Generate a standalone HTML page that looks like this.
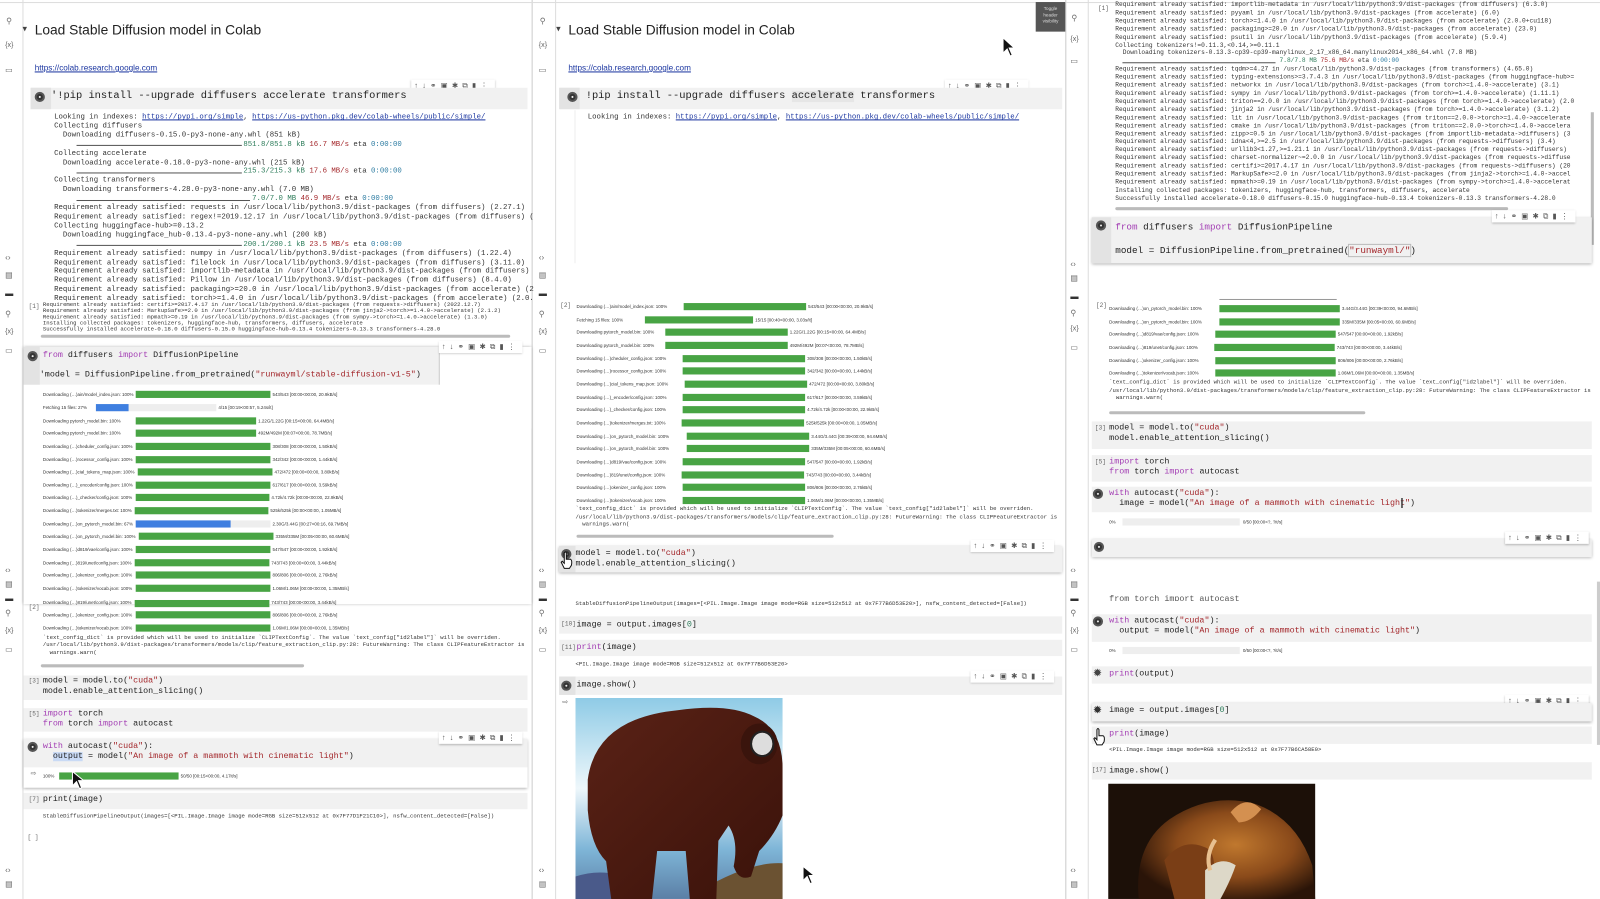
<!DOCTYPE html>
<html><head><meta charset="utf-8"><style>
*{margin:0;padding:0;box-sizing:border-box}
html,body{width:1600px;height:899px;overflow:hidden;background:#fff}
#w{position:absolute;left:0;top:0;width:1568px;height:881px;transform:scale(1.0204,1.0204);transform-origin:0 0;font-family:"Liberation Sans",sans-serif;color:#222}
.a{position:absolute;white-space:pre}
.m{font-family:"Liberation Mono",monospace}
.o{position:absolute;white-space:pre;font-family:"Liberation Mono",monospace;font-size:7.2px;line-height:8.9px;color:#333}
.s{position:absolute;white-space:pre;font-family:"Liberation Mono",monospace;font-size:5.5px;line-height:6px;color:#333}
.band{position:absolute;background:#f1f1f1}
.pl{position:absolute;white-space:pre;font-size:4.4px;line-height:7px;color:#333}
.bg{position:absolute;height:7px;background:#48a444}
.bb{position:absolute;height:7px;background:#3f7fe0}
.bgr{position:absolute;height:7px;background:#eee}
.ic{position:absolute;color:#666;font-size:8px;line-height:8px}
.run{position:absolute;width:10px;height:10px;border-radius:50%;background:#333;border:2px solid #555}
.run:after{content:"";position:absolute;left:2px;top:2px;width:2px;height:2px;border-radius:50%;background:#eee}
.tb{position:absolute;font-size:7.5px;color:#555;letter-spacing:4px;background:#fff;box-shadow:0 1px 2px rgba(0,0,0,.25);padding:1px 3px;white-space:pre}
.k{color:#a23cb3}.st{color:#a3262a}.u{color:#1a35a0;text-decoration:underline}.gr{color:#2e7d5b}
.hl{position:absolute;height:1px;background:#555}
.sb{position:absolute;height:3px;background:#bbb;border-radius:2px}
.num{position:absolute;font-size:6px;color:#666;font-family:"Liberation Mono",monospace}
.vl{position:absolute;width:1px;background:#ddd}
</style></head><body><div id="w">

<div class="vl" style="left:22px;top:0;height:881px"></div>
<div class="vl" style="left:521px;top:0;height:881px;background:#ccc"></div>
<div style="position:absolute;left:518px;top:420px;width:3px;height:120px;background:#bbb"></div>
<div class="vl" style="left:544px;top:0;height:881px"></div>
<div class="vl" style="left:1044px;top:0;height:881px;background:#ccc"></div>
<div class="vl" style="left:1066px;top:0;height:881px"></div>
<div style="position:absolute;left:1559px;top:110px;width:3px;height:130px;background:#bbb"></div>
<div style="position:absolute;left:0;top:2px;width:1568px;height:1px;background:#ddd"></div>

<!-- sidebar icons -->
<div class="ic" style="left:6px;top:17px">⚲</div><div class="ic" style="left:5px;top:41px;font-size:7px">{x}</div><div class="ic" style="left:5px;top:65px">▭</div>
<div class="ic" style="left:5px;top:249px">‹›</div><div class="ic" style="left:5px;top:266px">▤</div><div class="ic" style="left:5px;top:284px;color:#333">▬</div>
<div class="ic" style="left:5px;top:304px">⚲</div><div class="ic" style="left:5px;top:322px;font-size:7px">{x}</div><div class="ic" style="left:5px;top:340px">▭</div>
<div class="ic" style="left:5px;top:555px">‹›</div><div class="ic" style="left:5px;top:569px">▤</div><div class="ic" style="left:5px;top:583px;color:#333">▬</div><div class="ic" style="left:5px;top:597px">⚲</div><div class="ic" style="left:5px;top:615px;font-size:7px">{x}</div><div class="ic" style="left:5px;top:633px">▭</div>
<div class="ic" style="left:5px;top:849px">‹›</div><div class="ic" style="left:5px;top:863px">▤</div>

<div class="ic" style="left:529px;top:17px">⚲</div><div class="ic" style="left:528px;top:41px;font-size:7px">{x}</div><div class="ic" style="left:528px;top:65px">▭</div>
<div class="ic" style="left:528px;top:249px">‹›</div><div class="ic" style="left:528px;top:266px">▤</div><div class="ic" style="left:528px;top:284px;color:#333">▬</div>
<div class="ic" style="left:528px;top:304px">⚲</div><div class="ic" style="left:528px;top:322px;font-size:7px">{x}</div><div class="ic" style="left:528px;top:340px">▭</div>
<div class="ic" style="left:528px;top:555px">‹›</div><div class="ic" style="left:528px;top:569px">▤</div><div class="ic" style="left:528px;top:583px;color:#333">▬</div><div class="ic" style="left:528px;top:597px">⚲</div><div class="ic" style="left:528px;top:615px;font-size:7px">{x}</div><div class="ic" style="left:528px;top:633px">▭</div>
<div class="ic" style="left:528px;top:849px">‹›</div><div class="ic" style="left:528px;top:863px">▤</div>

<div class="ic" style="left:1050px;top:14px">⚲</div><div class="ic" style="left:1049px;top:35px;font-size:7px">{x}</div><div class="ic" style="left:1049px;top:56px">▭</div>
<div class="ic" style="left:1049px;top:255px">‹›</div><div class="ic" style="left:1049px;top:269px">▤</div><div class="ic" style="left:1049px;top:287px;color:#333">▬</div>
<div class="ic" style="left:1049px;top:303px">⚲</div><div class="ic" style="left:1049px;top:319px;font-size:7px">{x}</div><div class="ic" style="left:1049px;top:337px">▭</div>
<div class="ic" style="left:1049px;top:555px">‹›</div><div class="ic" style="left:1049px;top:569px">▤</div><div class="ic" style="left:1049px;top:583px;color:#333">▬</div><div class="ic" style="left:1049px;top:597px">⚲</div><div class="ic" style="left:1049px;top:615px;font-size:7px">{x}</div><div class="ic" style="left:1049px;top:633px">▭</div>
<div class="ic" style="left:1049px;top:849px">‹›</div><div class="ic" style="left:1049px;top:863px">▤</div>

<!-- ================= PANEL 1 ================= -->
<div class="a" style="left:22px;top:23px;font-size:9px;color:#444">▾</div>
<div class="a" style="left:34px;top:22px;font-size:13.5px;color:#222">Load Stable Diffusion model in Colab</div>
<div class="a u" style="left:34px;top:62px;font-size:8px">https://colab.research.google.com</div>
<div class="tb" style="left:403px;top:78px">↑↓⚭▣✱⧉▮⋮</div>
<div class="band" style="left:30px;top:86px;width:487px;height:21px"></div>
<div class="band" style="left:30px;top:86px;width:20px;height:21px;background:#e3e3e3"></div>
<div class="run" style="left:34px;top:90px"></div>
<div class="a m" style="left:50px;top:89px;font-size:10.2px">'!pip install --upgrade diffusers accelerate transformers</div>
<div class="o" style="left:53px;top:111px">Looking in indexes: <span class="u">https://pypi.org/simple</span>, <span class="u">https://us-python.pkg.dev/colab-wheels/public/simple/</span>
Collecting diffusers
  Downloading diffusers-0.15.0-py3-none-any.whl (851 kB)
                                           <span class="gr">851.8/851.8 kB</span> <span class="st">16.7 MB/s</span> eta <span style="color:#2a7aa0">0:00:00</span>
Collecting accelerate
  Downloading accelerate-0.18.0-py3-none-any.whl (215 kB)
                                           <span class="gr">215.3/215.3 kB</span> <span class="st">17.6 MB/s</span> eta <span style="color:#2a7aa0">0:00:00</span>
Collecting transformers
  Downloading transformers-4.28.0-py3-none-any.whl (7.0 MB)
                                             <span class="gr">7.0/7.0 MB</span> <span class="st">46.9 MB/s</span> eta <span style="color:#2a7aa0">0:00:00</span>
Requirement already satisfied: requests in /usr/local/lib/python3.9/dist-packages (from diffusers) (2.27.1)
Requirement already satisfied: regex!=2019.12.17 in /usr/local/lib/python3.9/dist-packages (from diffusers) (
Collecting huggingface-hub>=0.13.2
  Downloading huggingface_hub-0.13.4-py3-none-any.whl (200 kB)
                                           <span class="gr">200.1/200.1 kB</span> <span class="st">23.5 MB/s</span> eta <span style="color:#2a7aa0">0:00:00</span>
Requirement already satisfied: numpy in /usr/local/lib/python3.9/dist-packages (from diffusers) (1.22.4)
Requirement already satisfied: filelock in /usr/local/lib/python3.9/dist-packages (from diffusers) (3.11.0)
Requirement already satisfied: importlib-metadata in /usr/local/lib/python3.9/dist-packages (from diffusers)
Requirement already satisfied: Pillow in /usr/local/lib/python3.9/dist-packages (from diffusers) (8.4.0)
Requirement already satisfied: packaging>=20.0 in /usr/local/lib/python3.9/dist-packages (from accelerate) (2
Requirement already satisfied: torch>=1.4.0 in /usr/local/lib/python3.9/dist-packages (from accelerate) (2.0.</div>
<div class="hl" style="left:75px;top:142px;width:162px"></div>
<div class="hl" style="left:75px;top:169px;width:162px"></div>
<div class="hl" style="left:75px;top:196px;width:170px"></div>
<div class="hl" style="left:75px;top:240px;width:162px"></div>
<div class="num" style="left:28px;top:297px">[1]</div>
<div class="s" style="left:42px;top:296px">Requirement already satisfied: certifi>=2017.4.17 in /usr/local/lib/python3.9/dist-packages (from requests->diffusers) (2022.12.7)
Requirement already satisfied: MarkupSafe>=2.0 in /usr/local/lib/python3.9/dist-packages (from jinja2->torch>=1.4.0->accelerate) (2.1.2)
Requirement already satisfied: mpmath>=0.19 in /usr/local/lib/python3.9/dist-packages (from sympy->torch>=1.4.0->accelerate) (1.3.0)
Installing collected packages: tokenizers, huggingface-hub, transformers, diffusers, accelerate
Successfully installed accelerate-0.18.0 diffusers-0.15.0 huggingface-hub-0.13.4 tokenizers-0.13.3 transformers-4.28.0</div>
<div class="sb" style="left:40px;top:328px;width:460px"></div>

<div style="position:absolute;left:23px;top:340px;width:498px;height:252px;background:#fff;box-shadow:0 0 3px rgba(0,0,0,.35)"></div>
<div class="band" style="left:23px;top:340px;width:408px;height:37px"></div>
<div class="band" style="left:23px;top:340px;width:16px;height:37px;background:#e3e3e3"></div>
<div style="position:absolute;left:430px;top:340px;width:1px;height:37px;background:#ccc"></div>
<div class="tb" style="left:430px;top:334px">↑↓⚭▣✱⧉▮⋮</div>
<div class="run" style="left:27px;top:344px"></div>
<div class="a m" style="left:42px;top:344px;font-size:8.2px"><span class="k">from</span> diffusers <span class="k">import</span> DiffusionPipeline</div>
<div class="a m" style="left:39px;top:363px;font-size:8.2px">'model = DiffusionPipeline.from_pretrained(<span class="st">"runwayml/stable-diffusion-v1-5"</span>)</div>

<div class="pl" style="left:42px;top:383px">Downloading (…)ain/model_index.json: 100%</div><div class="bg" style="left:133px;top:383px;width:132px"></div><div class="pl" style="left:267px;top:383px">543/543 [00:00&lt;00:00, 20.9kB/s]</div>
<div class="pl" style="left:42px;top:396px">Fetching 15 files: 27%</div><div class="bgr" style="left:94px;top:396px;width:118px"></div><div class="bb" style="left:94px;top:396px;width:32px"></div><div class="pl" style="left:214px;top:396px">4/15 [00:19&lt;00:57, 5.24s/it]</div>
<div class="pl" style="left:42px;top:409px">Downloading pytorch_model.bin: 100%</div><div class="bg" style="left:133px;top:409px;width:118px"></div><div class="pl" style="left:253px;top:409px">1.22G/1.22G [00:15&lt;00:00, 64.4MB/s]</div>
<div class="pl" style="left:42px;top:421px">Downloading pytorch_model.bin: 100%</div><div class="bg" style="left:133px;top:421px;width:118px"></div><div class="pl" style="left:253px;top:421px">492M/492M [00:07&lt;00:00, 78.7MB/s]</div>
<div class="pl" style="left:42px;top:434px">Downloading (…)cheduler_config.json: 100%</div><div class="bg" style="left:133px;top:434px;width:132px"></div><div class="pl" style="left:267px;top:434px">308/308 [00:00&lt;00:00, 1.50kB/s]</div>
<div class="pl" style="left:42px;top:447px">Downloading (…)rocessor_config.json: 100%</div><div class="bg" style="left:133px;top:447px;width:132px"></div><div class="pl" style="left:267px;top:447px">342/342 [00:00&lt;00:00, 1.44kB/s]</div>
<div class="pl" style="left:42px;top:459px">Downloading (…)cial_tokens_map.json: 100%</div><div class="bg" style="left:135px;top:459px;width:132px"></div><div class="pl" style="left:269px;top:459px">472/472 [00:00&lt;00:00, 3.80kB/s]</div>
<div class="pl" style="left:42px;top:472px">Downloading (…)_encoder/config.json: 100%</div><div class="bg" style="left:133px;top:472px;width:132px"></div><div class="pl" style="left:267px;top:472px">617/617 [00:00&lt;00:00, 3.59kB/s]</div>
<div class="pl" style="left:42px;top:484px">Downloading (…)_checker/config.json: 100%</div><div class="bg" style="left:133px;top:484px;width:131px"></div><div class="pl" style="left:266px;top:484px">4.72k/4.72k [00:00&lt;00:00, 22.9kB/s]</div>
<div class="pl" style="left:42px;top:497px">Downloading (…)tokenizer/merges.txt: 100%</div><div class="bg" style="left:132px;top:497px;width:131px"></div><div class="pl" style="left:265px;top:497px">525k/525k [00:00&lt;00:00, 1.05MB/s]</div>
<div class="pl" style="left:42px;top:510px">Downloading (…)on_pytorch_model.bin: 67%</div><div class="bgr" style="left:133px;top:510px;width:132px"></div><div class="bb" style="left:133px;top:510px;width:93px"></div><div class="pl" style="left:267px;top:510px">2.30G/3.44G [00:27&lt;00:16, 69.7MB/s]</div>
<div class="pl" style="left:42px;top:522px">Downloading (…)on_pytorch_model.bin: 100%</div><div class="bg" style="left:136px;top:522px;width:132px"></div><div class="pl" style="left:270px;top:522px">335M/335M [00:05&lt;00:00, 60.6MB/s]</div>
<div class="pl" style="left:42px;top:535px">Downloading (…)d819/vae/config.json: 100%</div><div class="bg" style="left:133px;top:535px;width:132px"></div><div class="pl" style="left:267px;top:535px">547/547 [00:00&lt;00:00, 1.92kB/s]</div>
<div class="pl" style="left:42px;top:548px">Downloading (…)819/unet/config.json: 100%</div><div class="bg" style="left:132px;top:548px;width:132px"></div><div class="pl" style="left:266px;top:548px">743/743 [00:00&lt;00:00, 3.44kB/s]</div>
<div class="pl" style="left:42px;top:560px">Downloading (…)okenizer_config.json: 100%</div><div class="bg" style="left:133px;top:560px;width:132px"></div><div class="pl" style="left:267px;top:560px">806/806 [00:00&lt;00:00, 2.76kB/s]</div>
<div class="pl" style="left:42px;top:573px">Downloading (…)tokenizer/vocab.json: 100%</div><div class="bg" style="left:133px;top:573px;width:132px"></div><div class="pl" style="left:267px;top:573px">1.06M/1.06M [00:00&lt;00:00, 1.35MB/s]</div>

<div class="pl" style="left:42px;top:587px">Downloading (…)819/unet/config.json: 100%</div><div class="bg" style="left:132px;top:588px;width:132px"></div><div class="pl" style="left:266px;top:587px">743/743 [00:00&lt;00:00, 3.44kB/s]</div>
<div class="num" style="left:28px;top:592px">[2]</div>
<div class="pl" style="left:42px;top:599px">Downloading (…)okenizer_config.json: 100%</div><div class="bg" style="left:133px;top:599px;width:132px"></div><div class="pl" style="left:267px;top:599px">806/806 [00:00&lt;00:00, 2.76kB/s]</div>
<div class="pl" style="left:42px;top:612px">Downloading (…)tokenizer/vocab.json: 100%</div><div class="bg" style="left:133px;top:612px;width:132px"></div><div class="pl" style="left:267px;top:612px">1.06M/1.06M [00:00&lt;00:00, 1.35MB/s]</div>
<div class="s" style="left:42px;top:621px;line-height:7.3px">`text_config_dict` is provided which will be used to initialize `CLIPTextConfig`. The value `text_config["id2label"]` will be overriden.
/usr/local/lib/python3.9/dist-packages/transformers/models/clip/feature_extraction_clip.py:28: FutureWarning: The class CLIPFeatureExtractor is
  warnings.warn(</div>
<div class="sb" style="left:40px;top:651px;width:258px"></div>

<div class="band" style="left:23px;top:662px;width:494px;height:24px"></div>
<div class="num" style="left:28px;top:664px">[3]</div>
<div class="a m" style="left:42px;top:663px;font-size:8.2px;line-height:10px">model = model.to(<span class="st">"cuda"</span>)
model.enable_attention_slicing()</div>
<div class="band" style="left:23px;top:694px;width:494px;height:23px"></div>
<div class="num" style="left:28px;top:696px">[5]</div>
<div class="a m" style="left:42px;top:695px;font-size:8.2px;line-height:10px"><span class="k">import</span> torch
<span class="k">from</span> torch <span class="k">import</span> autocast</div>
<div style="position:absolute;left:23px;top:724px;width:494px;height:48px;background:#fff;box-shadow:0 1px 3px rgba(0,0,0,.35)"></div>
<div class="band" style="left:23px;top:724px;width:494px;height:28px"></div>
<div class="tb" style="left:430px;top:717px">↑↓⚭▣✱⧉▮⋮</div>
<div class="run" style="left:27px;top:727px"></div>
<div class="a m" style="left:42px;top:727px;font-size:8.2px;line-height:10px"><span class="k">with</span> autocast(<span class="st">"cuda"</span>):
  <span style="background:#c9daf5">output</span> = model(<span class="st">"An image of a mammoth with cinematic light"</span>)</div>
<div class="ic" style="left:30px;top:755px;font-size:7px">⇨</div>
<div class="pl" style="left:42px;top:757px">100%</div><div class="bg" style="left:58px;top:757px;width:117px"></div><div class="pl" style="left:177px;top:757px">50/50 [00:15&lt;00:00, 4.17it/s]</div>
<div class="band" style="left:23px;top:777px;width:494px;height:16px"></div>
<div class="num" style="left:28px;top:780px">[7]</div>
<div class="a m" style="left:42px;top:779px;font-size:8.2px">print(image)</div>
<div class="s" style="left:42px;top:797px">StableDiffusionPipelineOutput(images=[&lt;PIL.Image.Image image mode=RGB size=512x512 at 0x7F77D1F21C10&gt;], nsfw_content_detected=[False])</div>
<div class="num" style="left:27px;top:817px">[ ]</div>
<svg style="position:absolute;left:70px;top:755px" width="14" height="20"><path d="M1 1 L1 15 L5 11 L8 18 L10 17 L7 10 L12 10 Z" fill="#111" stroke="#fff" stroke-width="1"/></svg>

<!-- ================= PANEL 2 ================= -->
<div class="a" style="left:545px;top:23px;font-size:9px;color:#444">▾</div>
<div class="a" style="left:557px;top:22px;font-size:13.5px">Load Stable Diffusion model in Colab</div>
<div class="a u" style="left:557px;top:62px;font-size:8px">https://colab.research.google.com</div>
<div class="tb" style="left:926px;top:78px">↑↓⚭▣✱⧉▮⋮</div>
<div style="position:absolute;left:1015px;top:2px;width:29px;height:29px;background:#555;color:#ddd;font-size:4.5px;line-height:6px;text-align:center;padding-top:4px">Toggle<br>header<br>visibility</div>
<svg style="position:absolute;left:982px;top:36px" width="14" height="22"><path d="M1 1 L1 16 L5 12 L8 19 L10 18 L7 11 L12 11 Z" fill="#111" stroke="#fff" stroke-width="1"/></svg>
<div class="band" style="left:548px;top:86px;width:493px;height:21px"></div>
<div class="band" style="left:548px;top:86px;width:20px;height:21px;background:#e3e3e3"></div>
<div class="run" style="left:556px;top:90px"></div>
<div class="a m" style="left:574px;top:89px;font-size:10.2px">!pip install --upgrade diffusers <span style="background:#e6e6e6">accelerate</span> transformers</div>
<div class="o" style="left:576px;top:111px">Looking in indexes: <span class="u">https://pypi.org/simple</span>, <span class="u">https://us-python.pkg.dev/colab-wheels/public/simple/</span></div>
<div class="vl" style="left:563px;top:108px;height:150px;background:#eee"></div>

<div class="num" style="left:549px;top:296px">[2]</div>
<div class="pl" style="left:565px;top:297px">Downloading (…)ain/model_index.json: 100%</div><div class="bg" style="left:670px;top:297px;width:120px"></div><div class="pl" style="left:792px;top:297px">543/543 [00:00&lt;00:00, 20.9kB/s]</div>
<div class="pl" style="left:565px;top:310px">Fetching 15 files: 100%</div><div class="bg" style="left:632px;top:310px;width:106px"></div><div class="pl" style="left:740px;top:310px">15/15 [00:40&lt;00:00, 3.03s/it]</div>
<div class="pl" style="left:565px;top:322px">Downloading pytorch_model.bin: 100%</div><div class="bg" style="left:652px;top:322px;width:120px"></div><div class="pl" style="left:774px;top:322px">1.22G/1.22G [00:15&lt;00:00, 64.4MB/s]</div>
<div class="pl" style="left:565px;top:335px">Downloading pytorch_model.bin: 100%</div><div class="bg" style="left:652px;top:335px;width:120px"></div><div class="pl" style="left:774px;top:335px">492M/492M [00:07&lt;00:00, 78.7MB/s]</div>
<div class="pl" style="left:565px;top:348px">Downloading (…)cheduler_config.json: 100%</div><div class="bg" style="left:669px;top:348px;width:120px"></div><div class="pl" style="left:791px;top:348px">308/308 [00:00&lt;00:00, 1.50kB/s]</div>
<div class="pl" style="left:565px;top:360px">Downloading (…)rocessor_config.json: 100%</div><div class="bg" style="left:669px;top:360px;width:120px"></div><div class="pl" style="left:791px;top:360px">342/342 [00:00&lt;00:00, 1.44kB/s]</div>
<div class="pl" style="left:565px;top:373px">Downloading (…)cial_tokens_map.json: 100%</div><div class="bg" style="left:671px;top:373px;width:120px"></div><div class="pl" style="left:793px;top:373px">472/472 [00:00&lt;00:00, 3.80kB/s]</div>
<div class="pl" style="left:565px;top:386px">Downloading (…)_encoder/config.json: 100%</div><div class="bg" style="left:669px;top:386px;width:120px"></div><div class="pl" style="left:791px;top:386px">617/617 [00:00&lt;00:00, 3.59kB/s]</div>
<div class="pl" style="left:565px;top:398px">Downloading (…)_checker/config.json: 100%</div><div class="bg" style="left:669px;top:398px;width:120px"></div><div class="pl" style="left:791px;top:398px">4.72k/4.72k [00:00&lt;00:00, 22.9kB/s]</div>
<div class="pl" style="left:565px;top:411px">Downloading (…)tokenizer/merges.txt: 100%</div><div class="bg" style="left:668px;top:411px;width:120px"></div><div class="pl" style="left:790px;top:411px">525k/525k [00:00&lt;00:00, 1.05MB/s]</div>
<div class="pl" style="left:565px;top:424px">Downloading (…)on_pytorch_model.bin: 100%</div><div class="bg" style="left:673px;top:424px;width:120px"></div><div class="pl" style="left:795px;top:424px">3.44G/3.44G [00:39&lt;00:00, 94.6MB/s]</div>
<div class="pl" style="left:565px;top:436px">Downloading (…)on_pytorch_model.bin: 100%</div><div class="bg" style="left:673px;top:436px;width:120px"></div><div class="pl" style="left:795px;top:436px">335M/335M [00:05&lt;00:00, 60.6MB/s]</div>
<div class="pl" style="left:565px;top:449px">Downloading (…)d819/vae/config.json: 100%</div><div class="bg" style="left:669px;top:449px;width:120px"></div><div class="pl" style="left:791px;top:449px">547/547 [00:00&lt;00:00, 1.92kB/s]</div>
<div class="pl" style="left:565px;top:462px">Downloading (…)819/unet/config.json: 100%</div><div class="bg" style="left:668px;top:462px;width:120px"></div><div class="pl" style="left:790px;top:462px">743/743 [00:00&lt;00:00, 3.44kB/s]</div>
<div class="pl" style="left:565px;top:474px">Downloading (…)okenizer_config.json: 100%</div><div class="bg" style="left:669px;top:474px;width:120px"></div><div class="pl" style="left:791px;top:474px">806/806 [00:00&lt;00:00, 2.76kB/s]</div>
<div class="pl" style="left:565px;top:487px">Downloading (…)tokenizer/vocab.json: 100%</div><div class="bg" style="left:669px;top:487px;width:120px"></div><div class="pl" style="left:791px;top:487px">1.06M/1.06M [00:00&lt;00:00, 1.35MB/s]</div>
<div class="s" style="left:564px;top:495px;line-height:7.5px">`text_config_dict` is provided which will be used to initialize `CLIPTextConfig`. The value `text_config["id2label"]` will be overriden.
/usr/local/lib/python3.9/dist-packages/transformers/models/clip/feature_extraction_clip.py:28: FutureWarning: The class CLIPFeatureExtractor is
  warnings.warn(</div>
<div class="sb" style="left:565px;top:524px;width:252px"></div>

<div style="position:absolute;left:548px;top:535px;width:493px;height:26px;background:#f1f1f1;box-shadow:0 1px 3px rgba(0,0,0,.35)"></div>
<div class="band" style="left:548px;top:535px;width:16px;height:26px;background:#e3e3e3"></div>
<div class="tb" style="left:951px;top:529px">↑↓⚭▣✱⧉▮⋮</div>
<div class="run" style="left:550px;top:538px"></div>
<div class="a m" style="left:564px;top:538px;font-size:8.2px;line-height:10px">model = model.to(<span class="st">"cuda"</span>)
model.enable_attention_slicing()</div>
<svg style="position:absolute;left:548px;top:540px" width="14" height="18"><path d="M5 2 Q6 0 7 2 L7 8 L11 8 Q13 9 12 14 L10 17 L5 17 L2 11 L3 10 L5 12 Z" fill="#fff" stroke="#111" stroke-width="1"/></svg>
<div class="s" style="left:564px;top:589px">StableDiffusionPipelineOutput(images=[&lt;PIL.Image.Image image mode=RGB size=512x512 at 0x7F77B6D53E20&gt;], nsfw_content_detected=[False])</div>
<div class="band" style="left:548px;top:604px;width:493px;height:17px"></div>
<div class="num" style="left:550px;top:608px">[10]</div>
<div class="a m" style="left:565px;top:608px;font-size:8.2px">image = output.images[<span class="gr">0</span>]</div>
<div class="band" style="left:548px;top:627px;width:493px;height:16px"></div>
<div class="num" style="left:550px;top:631px">[11]</div>
<div class="a m" style="left:565px;top:630px;font-size:8.2px"><span class="k">print</span>(image)</div>
<div class="s" style="left:564px;top:648px">&lt;PIL.Image.Image image mode=RGB size=512x512 at 0x7F77B6D53E20&gt;</div>
<div class="band" style="left:548px;top:663px;width:493px;height:18px"></div>
<div class="band" style="left:548px;top:663px;width:16px;height:18px;background:#e3e3e3"></div>
<div class="tb" style="left:951px;top:657px">↑↓⚭▣✱⧉▮⋮</div>
<div class="run" style="left:550px;top:667px"></div>
<div class="a m" style="left:565px;top:667px;font-size:8.2px">image.show()</div>
<div class="ic" style="left:551px;top:685px;font-size:7px">⇨</div>
<svg style="position:absolute;left:564px;top:684px" width="203" height="197" viewBox="0 0 203 197">
<defs><linearGradient id="sky" x1="0" y1="0" x2="0" y2="1"><stop offset="0" stop-color="#8fcbe6"/><stop offset=".45" stop-color="#eef7fb"/><stop offset=".75" stop-color="#7fb6d8"/><stop offset="1" stop-color="#5b7fa6"/></linearGradient>
<linearGradient id="fur" x1="0" y1="0" x2="1" y2="1"><stop offset="0" stop-color="#5a2216"/><stop offset="1" stop-color="#3a120a"/></linearGradient></defs>
<rect width="203" height="197" fill="url(#sky)"/>
<path d="M0 175 Q30 165 60 180 L60 197 L0 197Z" fill="#4a5a8a"/>
<path d="M120 190 Q170 160 203 162 L203 197 L120 197Z" fill="#6b5232"/>
<path d="M12 80 Q20 20 100 12 Q150 5 175 18 Q203 30 203 70 L203 115 Q195 135 180 150 L172 175 Q160 180 155 165 Q160 140 150 125 L140 140 L138 197 L112 197 L108 150 L80 150 L75 197 L35 197 L30 160 Q15 145 12 110Z" fill="url(#fur)"/>
<ellipse cx="180" cy="45" rx="18" ry="20" fill="#3a140c"/>
<ellipse cx="183" cy="45" rx="10" ry="11" fill="#ddd"/>
<ellipse cx="183" cy="45" rx="11" ry="12" fill="none" stroke="#222" stroke-width="2"/>
</svg>
<svg style="position:absolute;left:786px;top:848px" width="14" height="20"><path d="M1 1 L1 15 L5 11 L8 18 L10 17 L7 10 L12 10 Z" fill="#111" stroke="#fff" stroke-width="1"/></svg>

<!-- ================= PANEL 3 ================= -->
<div class="num" style="left:1076px;top:5px">[1]</div>
<div class="a m" style="left:1093px;top:1px;font-size:6.1px;line-height:7.9px;color:#333">Requirement already satisfied: importlib-metadata in /usr/local/lib/python3.9/dist-packages (from diffusers) (6.3.0)
Requirement already satisfied: pyyaml in /usr/local/lib/python3.9/dist-packages (from accelerate) (6.0)
Requirement already satisfied: torch>=1.4.0 in /usr/local/lib/python3.9/dist-packages (from accelerate) (2.0.0+cu118)
Requirement already satisfied: packaging>=20.0 in /usr/local/lib/python3.9/dist-packages (from accelerate) (23.0)
Requirement already satisfied: psutil in /usr/local/lib/python3.9/dist-packages (from accelerate) (5.9.4)
Collecting tokenizers!=0.11.3,&lt;0.14,&gt;=0.11.1
  Downloading tokenizers-0.13.3-cp39-cp39-manylinux_2_17_x86_64.manylinux2014_x86_64.whl (7.8 MB)
                                            <span class="gr">7.8/7.8 MB</span> <span class="st">75.6 MB/s</span> eta <span style="color:#2a7aa0">0:00:00</span>
Requirement already satisfied: tqdm>=4.27 in /usr/local/lib/python3.9/dist-packages (from transformers) (4.65.0)
Requirement already satisfied: typing-extensions>=3.7.4.3 in /usr/local/lib/python3.9/dist-packages (from huggingface-hub>=
Requirement already satisfied: networkx in /usr/local/lib/python3.9/dist-packages (from torch>=1.4.0->accelerate) (3.1)
Requirement already satisfied: sympy in /usr/local/lib/python3.9/dist-packages (from torch>=1.4.0->accelerate) (1.11.1)
Requirement already satisfied: triton==2.0.0 in /usr/local/lib/python3.9/dist-packages (from torch>=1.4.0->accelerate) (2.0
Requirement already satisfied: jinja2 in /usr/local/lib/python3.9/dist-packages (from torch>=1.4.0->accelerate) (3.1.2)
Requirement already satisfied: lit in /usr/local/lib/python3.9/dist-packages (from triton==2.0.0->torch>=1.4.0->accelerate
Requirement already satisfied: cmake in /usr/local/lib/python3.9/dist-packages (from triton==2.0.0->torch>=1.4.0->accelera
Requirement already satisfied: zipp>=0.5 in /usr/local/lib/python3.9/dist-packages (from importlib-metadata->diffusers) (3
Requirement already satisfied: idna&lt;4,&gt;=2.5 in /usr/local/lib/python3.9/dist-packages (from requests->diffusers) (3.4)
Requirement already satisfied: urllib3&lt;1.27,&gt;=1.21.1 in /usr/local/lib/python3.9/dist-packages (from requests->diffusers)
Requirement already satisfied: charset-normalizer~=2.0.0 in /usr/local/lib/python3.9/dist-packages (from requests->diffuse
Requirement already satisfied: certifi>=2017.4.17 in /usr/local/lib/python3.9/dist-packages (from requests->diffusers) (20
Requirement already satisfied: MarkupSafe>=2.0 in /usr/local/lib/python3.9/dist-packages (from jinja2->torch>=1.4.0->accel
Requirement already satisfied: mpmath>=0.19 in /usr/local/lib/python3.9/dist-packages (from sympy->torch>=1.4.0->accelerat
Installing collected packages: tokenizers, huggingface-hub, transformers, diffusers, accelerate
Successfully installed accelerate-0.18.0 diffusers-0.15.0 huggingface-hub-0.13.4 tokenizers-0.13.3 transformers-4.28.0</div>
<div class="hl" style="left:1100px;top:61px;width:150px"></div>
<div class="sb" style="left:1093px;top:203px;width:385px"></div>

<div style="position:absolute;left:1070px;top:213px;width:490px;height:45px;background:#f1f1f1;box-shadow:0 1px 3px rgba(0,0,0,.35)"></div>
<div class="band" style="left:1070px;top:213px;width:19px;height:45px;background:#e3e3e3"></div>
<div class="tb" style="left:1462px;top:206px">↑↓⚭▣✱⧉▮⋮</div>
<div class="run" style="left:1074px;top:216px"></div>
<div class="a m" style="left:1093px;top:217px;font-size:9.1px"><span class="k">from</span> diffusers <span class="k">import</span> DiffusionPipeline</div>
<div class="a m" style="left:1093px;top:240px;font-size:9.1px">model = DiffusionPipeline.from_pretrained(<span class="st" style="outline:1px solid #bbb">"runwayml/"</span>)</div>

<div class="hl" style="left:1195px;top:293px;width:115px;background:#999"></div>
<div class="num" style="left:1074px;top:296px">[2]</div>
<div class="pl" style="left:1087px;top:299px">Downloading (…)on_pytorch_model.bin: 100%</div><div class="bg" style="left:1195px;top:299px;width:118px"></div><div class="pl" style="left:1315px;top:299px">3.44G/3.44G [00:39&lt;00:00, 94.6MB/s]</div>
<div class="pl" style="left:1087px;top:312px">Downloading (…)on_pytorch_model.bin: 100%</div><div class="bg" style="left:1195px;top:312px;width:118px"></div><div class="pl" style="left:1315px;top:312px">335M/335M [00:05&lt;00:00, 60.6MB/s]</div>
<div class="pl" style="left:1087px;top:324px">Downloading (…)d819/vae/config.json: 100%</div><div class="bg" style="left:1191px;top:324px;width:118px"></div><div class="pl" style="left:1311px;top:324px">547/547 [00:00&lt;00:00, 1.92kB/s]</div>
<div class="pl" style="left:1087px;top:337px">Downloading (…)819/unet/config.json: 100%</div><div class="bg" style="left:1190px;top:337px;width:118px"></div><div class="pl" style="left:1310px;top:337px">743/743 [00:00&lt;00:00, 3.44kB/s]</div>
<div class="pl" style="left:1087px;top:350px">Downloading (…)okenizer_config.json: 100%</div><div class="bg" style="left:1191px;top:350px;width:118px"></div><div class="pl" style="left:1311px;top:350px">806/806 [00:00&lt;00:00, 2.76kB/s]</div>
<div class="pl" style="left:1087px;top:362px">Downloading (…)tokenizer/vocab.json: 100%</div><div class="bg" style="left:1191px;top:362px;width:118px"></div><div class="pl" style="left:1311px;top:362px">1.06M/1.06M [00:00&lt;00:00, 1.35MB/s]</div>
<div class="s" style="left:1087px;top:371px;line-height:7.6px">`text_config_dict` is provided which will be used to initialize `CLIPTextConfig`. The value `text_config["id2label"]` will be overriden.
/usr/local/lib/python3.9/dist-packages/transformers/models/clip/feature_extraction_clip.py:28: FutureWarning: The class CLIPFeatureExtractor is
  warnings.warn(</div>
<div class="sb" style="left:1087px;top:403px;width:251px"></div>

<div class="band" style="left:1070px;top:413px;width:490px;height:27px"></div>
<div class="num" style="left:1073px;top:416px">[3]</div>
<div class="a m" style="left:1087px;top:415px;font-size:8.2px;line-height:10px">model = model.to(<span class="st">"cuda"</span>)
model.enable_attention_slicing()</div>
<div class="band" style="left:1070px;top:446px;width:490px;height:26px"></div>
<div class="num" style="left:1073px;top:449px">[5]</div>
<div class="a m" style="left:1087px;top:448px;font-size:8.2px;line-height:10px"><span class="k">import</span> torch
<span class="k">from</span> torch <span class="k">import</span> autocast</div>
<div class="band" style="left:1070px;top:477px;width:490px;height:25px"></div>
<div class="run" style="left:1071px;top:479px"></div>
<div class="a m" style="left:1087px;top:479px;font-size:8.2px;line-height:10px"><span class="k">with</span> autocast(<span class="st">"cuda"</span>):
  image = model(<span class="st">"An image of a mammoth with cinematic light"</span>)</div>
<div class="a" style="left:1372px;top:486px;font-size:14px;line-height:14px">I</div>
<div class="pl" style="left:1087px;top:508px">0%</div><div class="bgr" style="left:1100px;top:508px;width:115px"></div><div class="pl" style="left:1218px;top:508px">0/50 [00:00&lt;?, ?it/s]</div>
<div style="position:absolute;left:1070px;top:528px;width:490px;height:18px;background:#f1f1f1;box-shadow:0 1px 3px rgba(0,0,0,.35)"></div>
<div class="tb" style="left:1475px;top:521px">↑↓⚭▣✱⧉▮⋮</div>
<div class="run" style="left:1072px;top:531px"></div>

<div class="a m" style="left:1087px;top:583px;font-size:8.2px;color:#555;height:6px;overflow:hidden">from torch import autocast</div>
<div class="band" style="left:1070px;top:602px;width:490px;height:27px"></div>
<div class="run" style="left:1071px;top:604px"></div>
<div class="a m" style="left:1087px;top:604px;font-size:8.2px;line-height:10px"><span class="k">with</span> autocast(<span class="st">"cuda"</span>):
  output = model(<span class="st">"An image of a mammoth with cinematic light"</span>)</div>
<div class="pl" style="left:1087px;top:634px">0%</div><div class="bgr" style="left:1100px;top:634px;width:115px"></div><div class="pl" style="left:1218px;top:634px">0/50 [00:00&lt;?, ?it/s]</div>
<div class="band" style="left:1070px;top:653px;width:490px;height:17px"></div>
<div class="a" style="left:1071px;top:655px;font-size:11px;color:#444;line-height:11px">✹</div>
<div class="a m" style="left:1087px;top:656px;font-size:8.2px"><span class="k">print</span>(output)</div>
<div class="tb" style="left:1475px;top:681px">↑↓⚭▣✱⧉▮⋮</div>
<div style="position:absolute;left:1070px;top:689px;width:490px;height:18px;background:#f1f1f1;box-shadow:0 1px 3px rgba(0,0,0,.35)"></div>
<div class="a" style="left:1071px;top:691px;font-size:11px;color:#333;line-height:11px">✹</div>
<div class="a m" style="left:1087px;top:692px;font-size:8.2px">image = output.images[<span class="gr">0</span>]</div>
<div class="band" style="left:1070px;top:712px;width:490px;height:17px"></div>
<div class="a m" style="left:1087px;top:715px;font-size:8.2px"><span class="k">print</span>(image)</div>
<svg style="position:absolute;left:1070px;top:713px" width="14" height="18"><path d="M5 2 Q6 0 7 2 L7 8 L11 8 Q13 9 12 14 L10 17 L5 17 L2 11 L3 10 L5 12 Z" fill="#fff" stroke="#111" stroke-width="1"/></svg>
<div class="s" style="left:1087px;top:732px">&lt;PIL.Image.Image image mode=RGB size=512x512 at 0x7F77B6CA58E0&gt;</div>
<div class="band" style="left:1070px;top:747px;width:490px;height:17px"></div>
<div class="num" style="left:1070px;top:751px">[17]</div>
<div class="a m" style="left:1087px;top:751px;font-size:8.2px">image.show()</div>
<svg style="position:absolute;left:1086px;top:768px" width="203" height="113" viewBox="0 0 203 113">
<defs><radialGradient id="mm" cx=".55" cy=".45" r=".6"><stop offset="0" stop-color="#c0782e"/><stop offset=".55" stop-color="#8a4a1a"/><stop offset="1" stop-color="#2a1408"/></radialGradient></defs>
<rect width="203" height="113" fill="#1c1008"/>
<path d="M30 113 Q25 60 60 35 Q100 8 145 20 Q185 35 200 80 L203 113Z" fill="url(#mm)"/>
<path d="M120 28 Q135 10 150 25 Q140 38 128 38Z" fill="#d49050"/>
<path d="M55 75 Q75 50 100 65 Q110 85 95 113 L65 113Z" fill="#7a3e16"/>
<path d="M95 85 Q110 70 125 80 Q120 95 110 113 L95 113Z" fill="#ddd8c8"/>
<path d="M105 55 Q95 70 100 85" fill="none" stroke="#e8c090" stroke-width="4"/>
</svg>
<div style="position:absolute;left:1565px;top:570px;width:3px;height:160px;background:#ccc"></div>
</div></body></html>
